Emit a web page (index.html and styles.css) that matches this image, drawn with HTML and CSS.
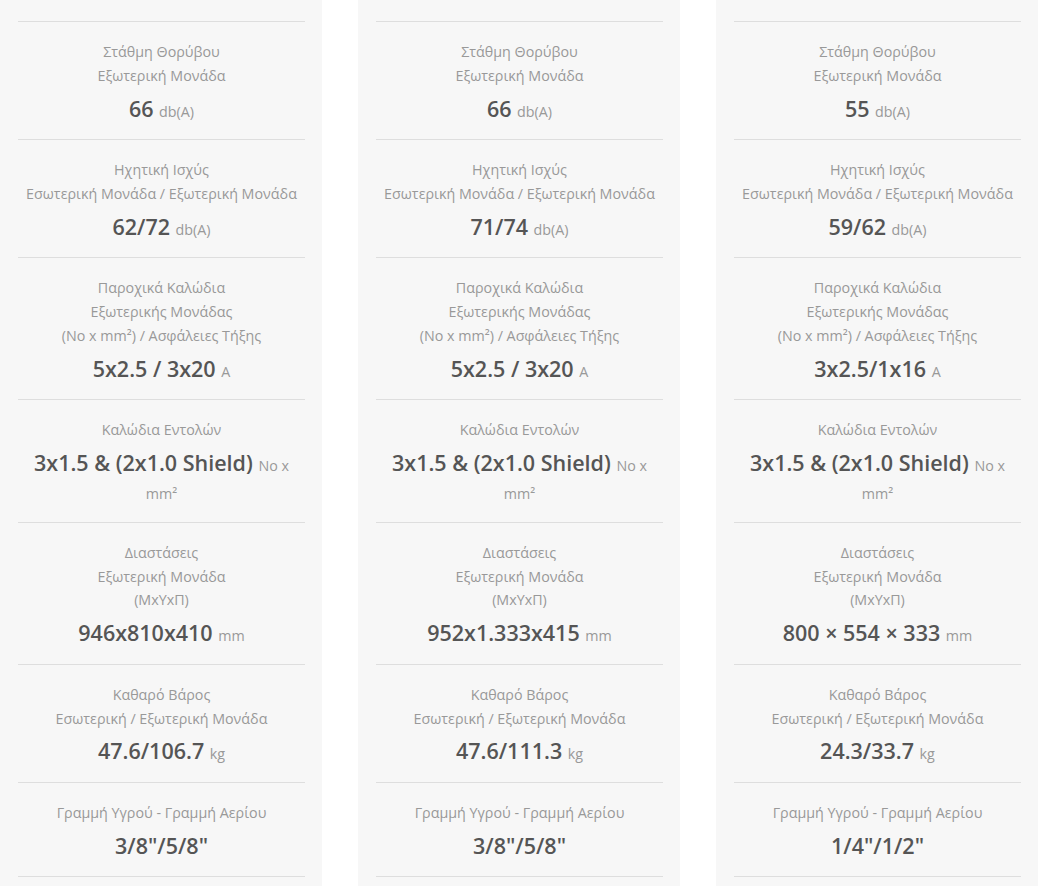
FILE: index.html
```html
<!DOCTYPE html>
<html lang="el">
<head>
<meta charset="utf-8">
<link rel="stylesheet" href="styles.css">
</head>
<body>
<div class="grid">
  <div class="col">
    <div class="row"><div class="label">Στάθμη Θορύβου<br>Εξωτερική Μονάδα</div><div class="value">66 <span class="unit">db(A)</span></div></div>
    <div class="row"><div class="label">Ηχητική Ισχύς<br>Εσωτερική Μονάδα / Εξωτερική Μονάδα</div><div class="value">62/72 <span class="unit">db(A)</span></div></div>
    <div class="row"><div class="label">Παροχικά Καλώδια<br>Εξωτερικής Μονάδας<br>(No x mm²) / Ασφάλειες Τήξης</div><div class="value">5x2.5 / 3x20 <span class="unit">A</span></div></div>
    <div class="row"><div class="label">Καλώδια Εντολών</div><div class="value">3x1.5 &amp; (2x1.0 Shield) <span class="unit">No x mm²</span></div></div>
    <div class="row"><div class="label">Διαστάσεις<br>Εξωτερική Μονάδα<br>(ΜxΥxΠ)</div><div class="value">946x810x410 <span class="unit">mm</span></div></div>
    <div class="row"><div class="label">Καθαρό Βάρος<br>Εσωτερική / Εξωτερική Μονάδα</div><div class="value">47.6/106.7 <span class="unit">kg</span></div></div>
    <div class="row"><div class="label">Γραμμή Υγρού - Γραμμή Αερίου</div><div class="value">3/8"/5/8"</div></div>
    <div class="row end"></div>
  </div>
  <div class="col">
    <div class="row"><div class="label">Στάθμη Θορύβου<br>Εξωτερική Μονάδα</div><div class="value">66 <span class="unit">db(A)</span></div></div>
    <div class="row"><div class="label">Ηχητική Ισχύς<br>Εσωτερική Μονάδα / Εξωτερική Μονάδα</div><div class="value">71/74 <span class="unit">db(A)</span></div></div>
    <div class="row"><div class="label">Παροχικά Καλώδια<br>Εξωτερικής Μονάδας<br>(No x mm²) / Ασφάλειες Τήξης</div><div class="value">5x2.5 / 3x20 <span class="unit">A</span></div></div>
    <div class="row"><div class="label">Καλώδια Εντολών</div><div class="value">3x1.5 &amp; (2x1.0 Shield) <span class="unit">No x mm²</span></div></div>
    <div class="row"><div class="label">Διαστάσεις<br>Εξωτερική Μονάδα<br>(ΜxΥxΠ)</div><div class="value">952x1.333x415 <span class="unit">mm</span></div></div>
    <div class="row"><div class="label">Καθαρό Βάρος<br>Εσωτερική / Εξωτερική Μονάδα</div><div class="value">47.6/111.3 <span class="unit">kg</span></div></div>
    <div class="row"><div class="label">Γραμμή Υγρού - Γραμμή Αερίου</div><div class="value">3/8"/5/8"</div></div>
    <div class="row end"></div>
  </div>
  <div class="col">
    <div class="row"><div class="label">Στάθμη Θορύβου<br>Εξωτερική Μονάδα</div><div class="value">55 <span class="unit">db(A)</span></div></div>
    <div class="row"><div class="label">Ηχητική Ισχύς<br>Εσωτερική Μονάδα / Εξωτερική Μονάδα</div><div class="value">59/62 <span class="unit">db(A)</span></div></div>
    <div class="row"><div class="label">Παροχικά Καλώδια<br>Εξωτερικής Μονάδας<br>(No x mm²) / Ασφάλειες Τήξης</div><div class="value">3x2.5/1x16 <span class="unit">A</span></div></div>
    <div class="row"><div class="label">Καλώδια Εντολών</div><div class="value">3x1.5 &amp; (2x1.0 Shield) <span class="unit">No x mm²</span></div></div>
    <div class="row"><div class="label">Διαστάσεις<br>Εξωτερική Μονάδα<br>(ΜxΥxΠ)</div><div class="value">800 × 554 × 333 <span class="unit">mm</span></div></div>
    <div class="row"><div class="label">Καθαρό Βάρος<br>Εσωτερική / Εξωτερική Μονάδα</div><div class="value">24.3/33.7 <span class="unit">kg</span></div></div>
    <div class="row"><div class="label">Γραμμή Υγρού - Γραμμή Αερίου</div><div class="value">1/4"/1/2"</div></div>
    <div class="row end"></div>
  </div>
</div>
</body>
</html>
```
FILE: styles.css
```css
html, body {
  margin: 0;
  padding: 0;
  background: #ffffff;
}
body {
  font-family: "Open Sans", "Noto Sans", sans-serif;
  height: 886px;
  overflow: hidden;
}
.grid {
  display: grid;
  grid-template-columns: 322px 322px 322px;
  column-gap: 36px;
}
.col {
  background: #f7f7f7;
  padding: 21px 17px 40px 18px;
}
.row {
  border-top: 1px solid #dedede;
  padding: 18px 0 16px;
  text-align: center;
}
.row.end {
  padding: 0;
}
.label {
  font-size: 14.3px;
  line-height: 23.8px;
  color: #999999;
}
.value {
  margin-top: 7px;
  font-size: 21.5px;
  line-height: 28.5px;
  font-weight: 600;
  color: #555555;
}
.unit {
  font-size: 14.3px;
  line-height: 1;
  font-weight: 400;
  color: #999999;
}
```
